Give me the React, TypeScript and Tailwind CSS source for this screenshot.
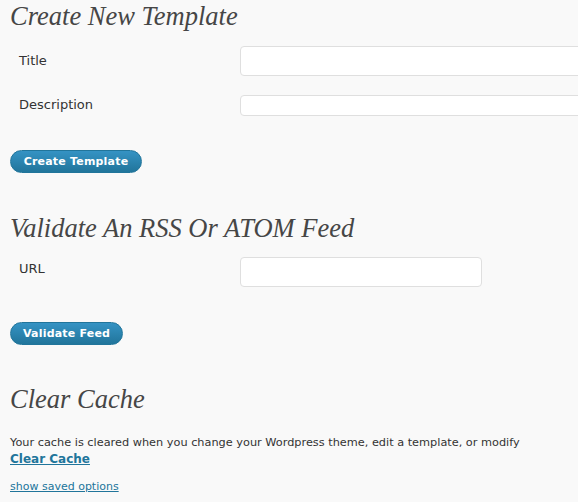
export default function App() {
  const heading = "text-[26.5px] italic text-[#464646] leading-none font-['Liberation_Serif',serif]"
  const btn =
    "block whitespace-nowrap rounded-full border border-[#21759b] bg-gradient-to-b from-[#3593c4] to-[#21759b] text-white font-bold text-[11px] leading-none tracking-[0.2px] h-[23px] px-3 font-['DejaVu_Sans',sans-serif]"
  const input = "shrink-0 bg-white border border-[#dfdfdf] rounded-[4px]"
  return (
    <div className="w-[578px] h-[502px] overflow-hidden bg-[#f9f9f9] text-[#333] font-['DejaVu_Sans',sans-serif] text-[12px]">
      <div className="pl-[10px]">
        {/* Create New Template */}
        <h2 className={`${heading} pt-[3px]`}>Create New Template</h2>
        <div className="flex items-center mt-[16px]">
          <label className="w-[230px] shrink-0 pl-[9px] text-[13px]">Title</label>
          <input className={`${input} w-[360px] h-[30px]`} />
        </div>
        <div className="flex items-center mt-[19px]">
          <label className="w-[230px] shrink-0 pl-[9px] text-[13px]">Description</label>
          <input className={`${input} w-[360px] h-[21px]`} />
        </div>
        <button className={`${btn} mt-[34px] w-[132px]`}>Create Template</button>

        {/* Validate feed */}
        <h2 className={`${heading} mt-[42px]`}>Validate An RSS Or ATOM Feed</h2>
        <div className="flex items-start mt-[16px]">
          <label className="w-[230px] shrink-0 pl-[9px] text-[13px] pt-[2px]">URL</label>
          <input className={`${input} w-[242px] h-[30px]`} />
        </div>
        <button className={`${btn} mt-[35px] w-[113px]`}>Validate Feed</button>

        {/* Clear cache */}
        <h2 className={`${heading} mt-[41px]`}>Clear Cache</h2>
        <p className="mt-[22px] whitespace-nowrap text-[11.3px] leading-[16px] text-[#333]">
          Your cache is cleared when you change your Wordpress theme, edit a template, or modify
        </p>
        <a href="#" className="block w-fit font-bold underline text-[#21759b] text-[12px] leading-[16px]">
          Clear Cache
        </a>
        <a href="#" className="block w-fit mt-[12px] underline text-[#21759b] text-[11px] leading-[15px]">
          show saved options
        </a>
      </div>
    </div>
  )
}
